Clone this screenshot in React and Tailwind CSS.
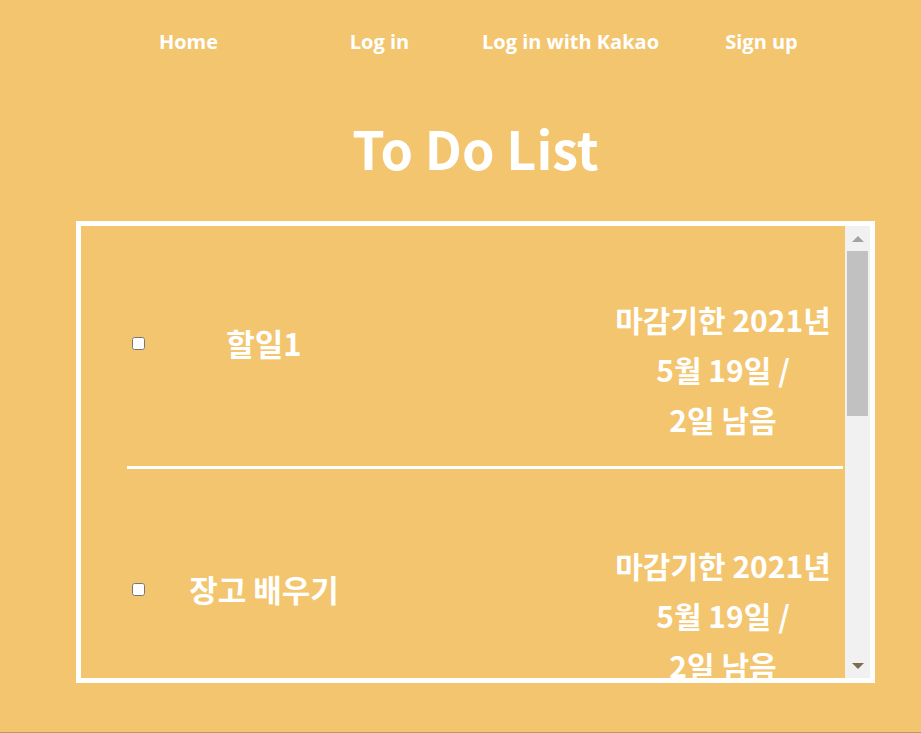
import React from 'react';

const todos = [
  { id: 1, title: '할일1', due: '2021년', date: '5월 19일 /', left: '2일 남음' },
  { id: 2, title: '장고 배우기', due: '2021년', date: '5월 19일 /', left: '2일 남음' },
];

const navItems = ['Home', 'Log in', 'Log in with Kakao', 'Sign up'];

const TodoRow = ({ todo }) => (
  <div className="flex items-start pt-[68px] pb-[22px]">
    <div className="mt-[24px] h-[50px] flex items-center">
      <input type="checkbox" className="ml-[5px] w-[13px] h-[13px] m-0" />
      <span className="w-[238px] text-center text-[31px] font-bold">{todo.title}</span>
    </div>
    <div className="flex-1" />
    <div className="w-[236px] mr-[2px] text-center text-[30px] font-bold leading-[50px]">
      <div>마감기한 {todo.due}</div>
      <div>{todo.date}</div>
      <div>{todo.left}</div>
    </div>
  </div>
);

const App = () => {
  return (
    <div className="h-[733px] bg-[#f3c56f] border-b border-[#b59a5e] text-white overflow-hidden">
      <nav className="flex pl-[93px] pt-[27px] font-['Open_Sans',sans-serif] font-bold text-[20px] leading-[30px]">
        {navItems.map(item => (
          <a key={item} className="w-[191px] text-center">{item}</a>
        ))}
      </nav>

      <h1 className="mt-[56px] ml-[76px] w-[799px] text-center text-[52px] font-bold leading-[70px] font-['Noto_Sans_CJK_KR',sans-serif]">
        To Do List
      </h1>

      <div className="mt-[38px] ml-[76px] w-[799px] h-[462px] border-[5px] border-white flex font-['Noto_Sans_CJK_KR',sans-serif]">
        <div className="flex-1 overflow-hidden pl-[46px] pr-[2px]">
          <TodoRow todo={todos[0]} />
          <div className="h-[3px] bg-white mb-[3px]" />
          <TodoRow todo={todos[1]} />
        </div>

        {/* scrollbar */}
        <div className="w-[25px] bg-[#f1f1f1] flex flex-col items-center">
          <div className="h-[25px] flex items-center justify-center">
            <div className="w-0 h-0 border-l-[6px] border-r-[6px] border-b-[6px] border-l-transparent border-r-transparent border-b-[#a3a3a3]" />
          </div>
          <div className="w-[21px] h-[165px] bg-[#c1c1c1]" />
          <div className="flex-1" />
          <div className="h-[25px] flex items-center justify-center">
            <div className="w-0 h-0 border-l-[6px] border-r-[6px] border-t-[6px] border-l-transparent border-r-transparent border-t-[#7f6c4d]" />
          </div>
        </div>
      </div>
    </div>
  );
};

export default App;
